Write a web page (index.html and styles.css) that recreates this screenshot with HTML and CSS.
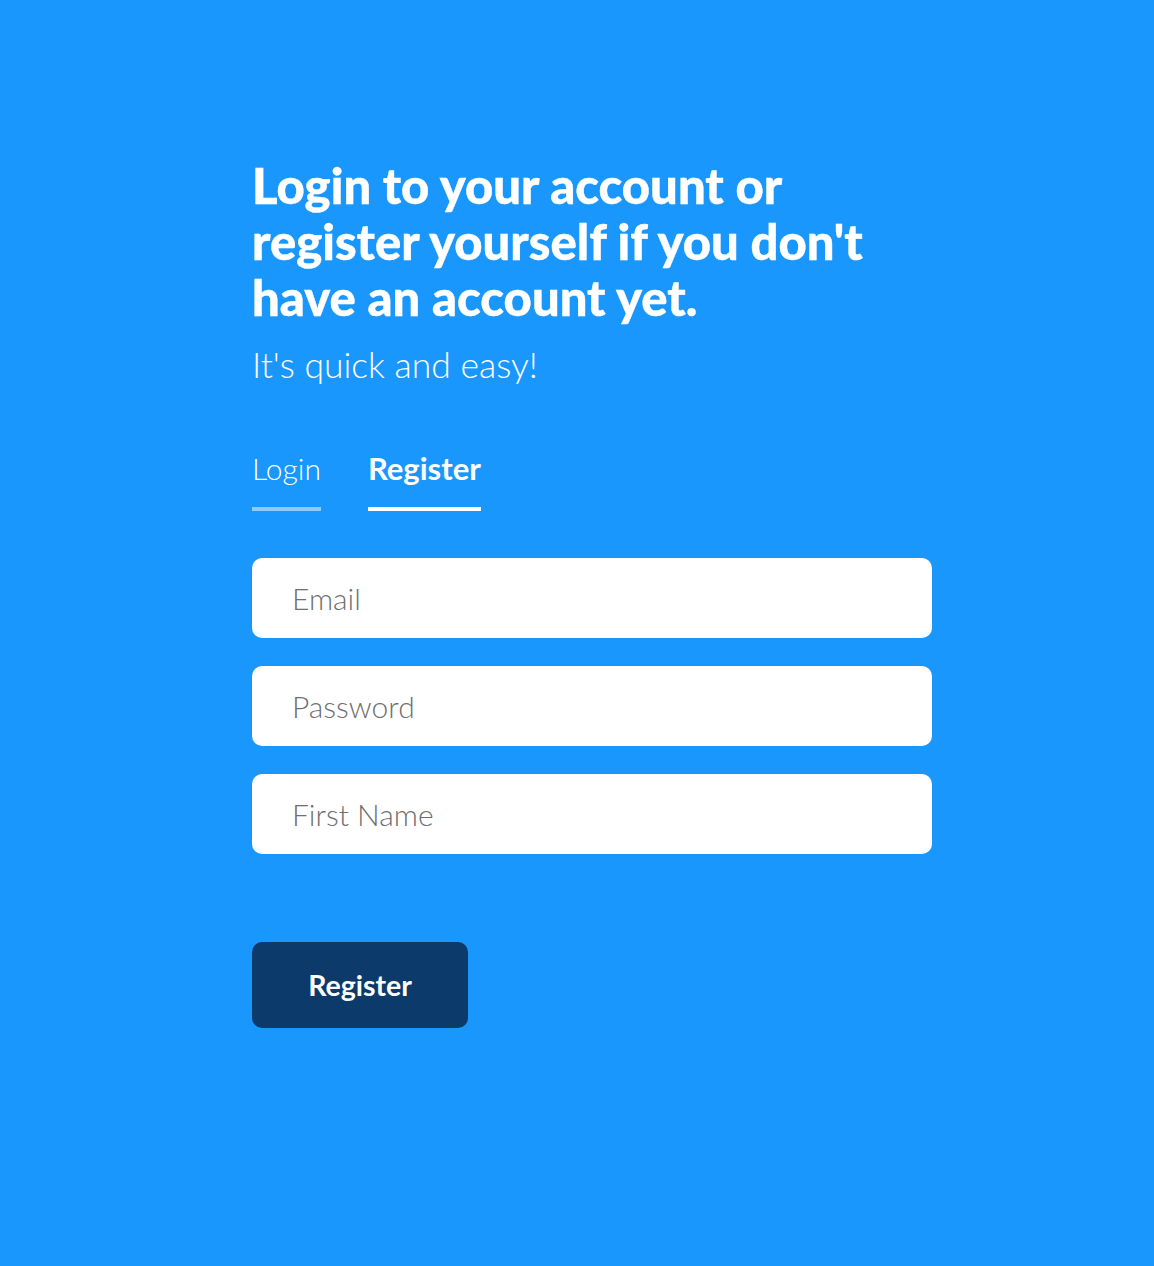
FILE: index.html
```html
<!DOCTYPE html>
<html lang="en">
<head>
<meta charset="utf-8">
<title>Login or Register</title>
<link rel="stylesheet" href="styles.css">
</head>
<body>
<main class="page">
  <section class="panel">
    <h1 class="title">Login to your account or register yourself if you don't have an account yet.</h1>
    <p class="subtitle">It's quick and easy!</p>
    <nav class="tabs">
      <a class="tab" href="#">Login</a>
      <a class="tab tab-active" href="#">Register</a>
    </nav>
    <form class="form">
      <input class="field" type="email" placeholder="Email">
      <input class="field" type="password" placeholder="Password">
      <input class="field" type="text" placeholder="First Name">
      <button class="submit" type="button">Register</button>
    </form>
  </section>
</main>
</body>
</html>
```
FILE: styles.css
```css
html, body {
  margin: 0;
  padding: 0;
  background: #1a97fd;
}
body {
  font-family: Lato, "Open Sans", sans-serif;
  color: #fff;
  min-height: 1266px;
}
.page {
  padding-top: 157px;
  padding-left: 252px;
}
.panel {
  width: 680px;
}
.title {
  margin: 0;
  font-size: 49px;
  line-height: 56px;
  font-weight: 900;
  width: 660px;
  -webkit-text-stroke: 0.4px #fff;
}
.subtitle {
  margin: 19px 0 0;
  font-size: 35.5px;
  font-weight: 300;
  line-height: 42px;
}
.tabs {
  display: flex;
  gap: 47px;
  margin-top: 62px;
}
.tab {
  color: #fff;
  text-decoration: none;
  font-size: 30px;
  font-weight: 300;
  line-height: 40px;
  padding-bottom: 19px;
  border-bottom: 4px solid rgba(255,255,255,0.5);
}
.tab-active {
  font-weight: 700;
  font-size: 31px;
  border-bottom-color: #fff;
}
.form {
  display: flex;
  flex-direction: column;
  align-items: flex-start;
  gap: 28px;
  margin-top: 47px;
}
.field {
  box-sizing: border-box;
  width: 680px;
  height: 80px;
  border: none;
  border-radius: 10px;
  background: #fff;
  padding: 0 0 0 40px;
  font-family: Lato, sans-serif;
  font-size: 30px;
  font-weight: 300;
  color: #333;
  outline: none;
}
.field::placeholder {
  color: #6f6f6f;
}
.submit {
  margin-top: 60px;
  width: 216px;
  height: 86px;
  border: none;
  border-radius: 10px;
  background: #0b3a6b;
  color: #fff;
  font-family: Lato, sans-serif;
  font-size: 28.5px;
  font-weight: 700;
  cursor: pointer;
}
```
